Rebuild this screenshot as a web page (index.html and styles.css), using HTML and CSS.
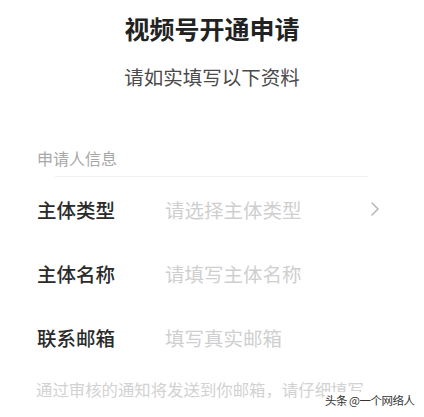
FILE: index.html
```html
<html>
    <head>
        <meta charset="utf-8">
        <title>视频号开通申请</title>
        <link rel="stylesheet" href="styles.css">
    </head>
    <body>
        <div class="page">
            <div class="title">视频号开通申请</div>
            <div class="subtitle">请如实填写以下资料</div>

            <div class="section_label">申请人信息</div>
            <div class="divider"></div>

            <div class="row">
                <div class="label">主体类型</div>
                <div class="placeholder">请选择主体类型</div>
                <svg class="arrow" width="10" height="16" viewBox="0 0 10 16">
                    <polyline points="2,2 8,8 2,14" fill="none" stroke="#b8b8b8" stroke-width="1.6" stroke-linecap="round" stroke-linejoin="round"/>
                </svg>
            </div>
            <div class="row">
                <div class="label">主体名称</div>
                <div class="placeholder">请填写主体名称</div>
            </div>
            <div class="row">
                <div class="label">联系邮箱</div>
                <div class="placeholder">填写真实邮箱</div>
            </div>

            <div class="note">通过审核的通知将发送到你邮箱，请仔细填写</div>

            <div class="watermark">头条 @一个网络人</div>
        </div>
    </body>
</html>
```

FILE: styles.css
```css
body{
    margin: 0;
    background: #fff;
    font-family: "Noto Sans CJK SC", "Noto Sans", sans-serif;
    color: #333;
}
.page{
    position: relative;
    width: 424px;
    height: 417px;
    overflow: hidden;
}
.title{
    padding-top: 10px;
    text-align: center;
    font-size: 25px;
    line-height: 36px;
    font-weight: bold;
    color: #222;
}
.subtitle{
    margin-top: 17px;
    text-align: center;
    font-size: 19.5px;
    line-height: 28px;
    color: #4a4a4a;
}
.section_label{
    margin-top: 57px;
    padding-left: 37px;
    font-size: 16px;
    line-height: 20px;
    color: #a8a8a8;
}
.divider{
    margin: 8px 56px 0 55px;
    height: 1px;
    background: #f0f0f0;
}
.row{
    display: flex;
    align-items: center;
    height: 64px;
    padding: 0 44px 0 37px;
}
.label{
    width: 128px;
    font-size: 19.5px;
    font-weight: 500;
    color: #2a2a2a;
}
.placeholder{
    flex: 1;
    font-size: 19.5px;
    color: #cfcfcf;
}
.arrow{
    display: block;
}
.note{
    margin-top: 10px;
    padding-left: 36px;
    font-size: 16.4px;
    line-height: 20px;
    color: #d2d2d2;
    white-space: nowrap;
}
.watermark{
    position: absolute;
    left: 325px;
    top: 392px;
    font-size: 11.5px;
    line-height: 16px;
    color: #333;
    background: #fff;
    white-space: nowrap;
    letter-spacing: -0.5px;
}
```
